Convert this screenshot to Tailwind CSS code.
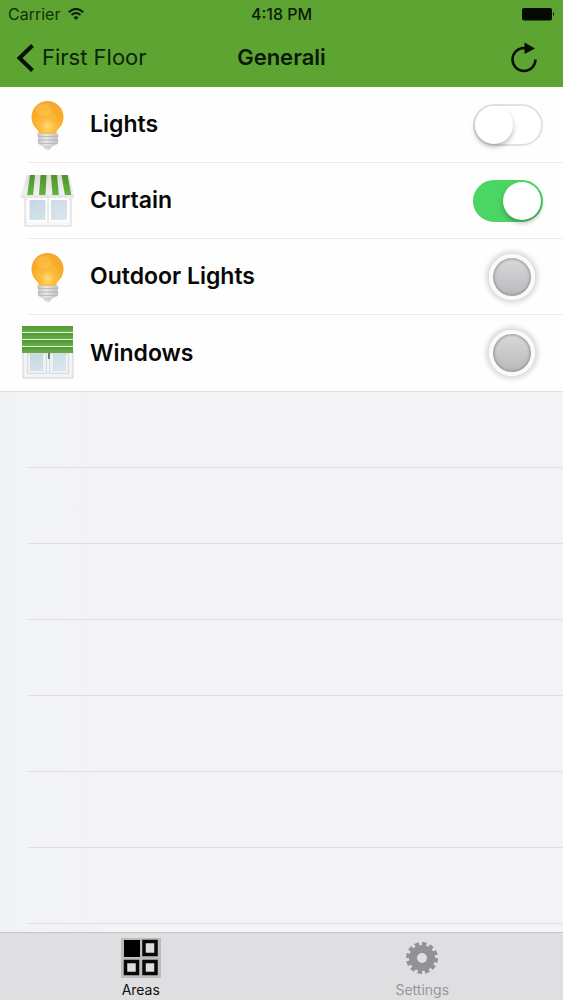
<!DOCTYPE html>
<html lang="en">
<head>
<meta charset="utf-8">
<meta name="viewport" content="width=device-width, initial-scale=1">
<title>Generali</title>
<script src="https://cdn.jsdelivr.net/npm/@tailwindcss/browser@4"></script>
</head>
<body class="flex h-screen flex-col overflow-hidden bg-[#f4f3f6] font-['Inter','Liberation_Sans',sans-serif] text-[#080808]">
<svg class="absolute size-0" aria-hidden="true">
  <defs>
    <radialGradient id="glow" cx="50%" cy="78%" r="78%">
      <stop offset="0" stop-color="#ffdc78"/><stop offset=".3" stop-color="#fbbc3c"/><stop offset=".7" stop-color="#f8a924"/><stop offset="1" stop-color="#f3a93a"/>
    </radialGradient>
    <linearGradient id="screw" x1="0" x2="1" y1="0" y2="0">
      <stop offset="0" stop-color="#c4c4c6"/><stop offset=".4" stop-color="#e6e6e8"/><stop offset="1" stop-color="#c0c0c2"/>
    </linearGradient>
    <linearGradient id="glass" x1="0" x2="1" y1="0" y2="1">
      <stop offset="0" stop-color="#c6d6e1"/><stop offset="1" stop-color="#dce8ee"/>
    </linearGradient>
    <linearGradient id="stripe" x1="0" x2="0" y1="0" y2="1">
      <stop offset="0" stop-color="#4a9427"/><stop offset="1" stop-color="#68b541"/>
    </linearGradient>
    <linearGradient id="slat" x1="0" x2="0" y1="0" y2="1">
      <stop offset="0" stop-color="#4f9a31"/><stop offset="1" stop-color="#68ac4a"/>
    </linearGradient>
    <linearGradient id="awning" x1="0" x2="0" y1="0" y2="1">
      <stop offset="0" stop-color="#dcdcdc"/><stop offset="1" stop-color="#f5f5f5"/>
    </linearGradient>
    <symbol id="bulb" viewBox="0 0 56 56">
      <path d="M27.500 4c9 0 16 7 16 16 0 6-3 10-6 13l-2 4h-16l-2-4c-3-3-6-7-6-13 0-9 7-16 16-16Z" fill="url(#glow)"/>
      <ellipse cx="24" cy="13" rx="8" ry="6" fill="#ffd873" opacity=".3"/>
      <path d="M17.500 36c6 1.500 14 1.500 20 0l1 3-1 2 1 3-1 3-6 3-1 2q-3 3-6 0l-1-2-5-3-1-3 1-3-1-2Z" fill="url(#screw)"/>
      <path d="M18 39.500h20M18 43h20M19 46.500h18M24 50h7" stroke="#b4b4b8" stroke-width=".8" fill="none"/>
    </symbol>
  </defs>
</svg>

<header class="shrink-0 bg-[#5ea433]">
  <div class="grid h-7 grid-cols-3 items-center px-2 text-base">
    <div class="flex items-center gap-2 text-[#12300b]">
      <span>Carrier</span>
      <svg class="h-3 w-4" viewBox="0 0 16 12" fill="none" stroke="#0b1c06" stroke-width="2" aria-label="Wi-Fi"><path d="M.8 4.200Q8-2.300 15.200 4.200M3.500 7q4.500-4 9 0"/><path d="M5.500 9.200q2.500-2 5 0L8 12Z" fill="#0b1c06" stroke="none"/></svg>
    </div>
    <div class="text-center font-medium whitespace-nowrap text-[#0b1c06]">4:18 PM</div>
    <svg class="h-4 w-[34px] justify-self-end" viewBox="0 0 34 16" aria-label="Battery full"><rect x="1" y="2" width="30" height="12.500" rx="2" fill="#050b03"/><path d="M32 6q2 2 0 4Z" fill="#050b03"/></svg>
  </div>
  <nav class="grid h-[59px] grid-cols-3 items-center px-4">
    <a href="#" class="flex items-center gap-2 text-[22px] whitespace-nowrap text-[#0d240a]">
      <svg class="h-7 w-[18px]" viewBox="0 0 18 28" fill="none" stroke="#061003" stroke-width="4"><path d="M16.500 1.500 3.500 14l13 12.500"/></svg>
      First Floor
    </a>
    <h1 class="text-center text-[22px] font-semibold text-[#091a06]">Generali</h1>
    <button type="button" aria-label="Refresh" class="mr-2 justify-self-end">
      <svg class="h-8 w-[30px]" viewBox="0 0 30 32" fill="none"><path d="M26.500 17.500A11.500 11.500 0 1 1 15 6h3" stroke="#061003" stroke-width="2.500"/><path d="M15.500.5 26 6.500 15.500 12Z" fill="#061003"/></svg>
    </button>
  </nav>
</header>

<main class="flex min-h-0 flex-1 flex-col overflow-hidden bg-linear-to-r from-[#f1f4f4] to-[#f4f3f6] to-20%">
  <ul class="shrink-0 border-b border-[#e2e2e4] bg-[#fefefe] text-[23px] font-semibold">
    <li class="ml-7 flex h-[76px] items-center border-b border-[#ececee]">
      <svg class="-ml-2 h-14 w-14" aria-hidden="true"><use href="#bulb"/></svg>
      <label for="lights" class="flex-1 pl-[14px]">Lights</label>
      <input id="lights" type="checkbox" role="switch" class="mr-5 h-[42px] w-[70px] appearance-none rounded-full border-2 border-[#e2e0e3] bg-white before:block before:size-[38px] before:rounded-full before:bg-white before:shadow-[0_3px_5px_#0004] checked:border-[#4bd563] checked:bg-[#4bd563] checked:before:ml-7">
    </li>
    <li class="ml-7 flex h-[76px] items-center border-b border-[#ececee]">
      <svg class="-ml-2 h-14 w-14" viewBox="0 0 56 56" aria-hidden="true">
        <rect x="5" y="26" width="46" height="27" fill="#f8f8f9" stroke="#d4d4d8"/>
        <path d="M8.500 26h18v22h-18zM30 26h18v22H30z" fill="url(#glass)" stroke="#fff" stroke-width="2"/>
        <path d="M28 28v22" stroke="#d5d9de"/>
        <path d="M7 2h42l5 20v3H1v-3Z" fill="url(#awning)"/>
        <path d="M10 2h5l-2 21H7ZM20.500 2h6l-1 21h-6.500ZM31 2h6l2 21h-6.500ZM41.500 2h6l4 21H45Z" fill="url(#stripe)"/>
        <path d="M1 22h53v2q-2 3-5 0-3 3-6 0-3 3-6 0-3 3-6 0-3 3-6 0-3 3-6 0-3 3-6 0-3 3-6 0-3 3-6 0Z" fill="#e6e6e9"/>
      </svg>
      <label for="curtain" class="flex-1 pl-[14px]">Curtain</label>
      <input id="curtain" type="checkbox" role="switch" checked class="mr-5 h-[42px] w-[70px] appearance-none rounded-full border-2 border-[#e2e0e3] bg-white before:block before:size-[38px] before:rounded-full before:bg-white before:shadow-[0_3px_5px_#0004] checked:border-[#4bd563] checked:bg-[#4bd563] checked:before:ml-7">
    </li>
    <li class="ml-7 flex h-[76px] items-center border-b border-[#ececee]">
      <svg class="-ml-2 h-14 w-14" aria-hidden="true"><use href="#bulb"/></svg>
      <span class="flex-1 pl-[14px]">Outdoor Lights</span>
      <button type="button" aria-label="Outdoor Lights" class="mr-7 size-[46px] rounded-full border-4 border-[#fafafa] bg-linear-to-b from-[#dadadc] to-[#b9b9bb] shadow-[0_0_5px_3px_#d8d8da,inset_0_0_3px_1px_#8e8e92]"></button>
    </li>
    <li class="ml-7 flex h-[76px] items-center">
      <svg class="-ml-2 h-14 w-14" viewBox="0 0 56 56" aria-hidden="true">
        <rect x="3" y="26" width="50" height="27" fill="#f3f3f5" stroke="#d2d2d6"/>
        <path d="M7.500 28.500h19v20h-19zM29.500 28.500h19v20h-19z" fill="#eef1f4" stroke="#d7dadf"/>
        <path d="M10 29h13v17H10zM33 29h13v17H33z" fill="url(#glass)"/>
        <path d="M29 28v6" stroke="#6f7c80" stroke-width="2"/>
        <rect x="2" y="1" width="51" height="27" fill="#e6f1e0"/>
        <g fill="url(#slat)"><rect x="2" y="1" width="51" height="6"/><rect x="2" y="8" width="51" height="6"/><rect x="2" y="15" width="51" height="6"/><rect x="2" y="22" width="51" height="6"/></g>
      </svg>
      <span class="flex-1 pl-[14px]">Windows</span>
      <button type="button" aria-label="Windows" class="mr-7 size-[46px] rounded-full border-4 border-[#fafafa] bg-linear-to-b from-[#dadadc] to-[#b9b9bb] shadow-[0_0_5px_3px_#d8d8da,inset_0_0_3px_1px_#8e8e92]"></button>
    </li>
  </ul>
  <div class="ml-7 min-h-0 flex-1 overflow-hidden" aria-hidden="true">
    <div class="h-[76px] border-b border-[#dfdfe1]"></div>
    <div class="h-[76px] border-b border-[#dfdfe1]"></div>
    <div class="h-[76px] border-b border-[#dfdfe1]"></div>
    <div class="h-[76px] border-b border-[#dfdfe1]"></div>
    <div class="h-[76px] border-b border-[#dfdfe1]"></div>
    <div class="h-[76px] border-b border-[#dfdfe1]"></div>
    <div class="h-[76px] border-b border-[#dfdfe1]"></div>
  </div>
</main>

<nav class="grid h-[68px] shrink-0 grid-cols-2 border-t border-[#c6c6c8] bg-[#dfdee1] text-sm">
  <a href="#" aria-current="page" class="flex flex-col items-center pt-1 text-[#101010]">
    <svg class="size-[42px]" viewBox="0 0 42 42" aria-hidden="true"><rect x="1" y="1" width="40" height="40" fill="#bcbcbe"/><path d="M4 3h16v17H4z" fill="#000"/><path d="M24 4.500h12v13H24zM5.500 24.500h12v12h-12zM24 24.500h12v12H24z" fill="#dddcdf" stroke="#080808" stroke-width="3.500"/></svg>
    <span class="leading-[22px]">Areas</span>
  </a>
  <a href="#" class="flex flex-col items-center pt-1 text-[#98989b]">
    <svg class="size-[42px]" viewBox="0 0 42 42" fill="none" stroke="#929295" aria-hidden="true"><circle cx="21" cy="21" r="9" stroke-width="8"/><circle cx="21" cy="21" r="14" stroke-width="4" pathLength="120" stroke-dasharray="6 4"/></svg>
    <span class="leading-[22px]">Settings</span>
  </a>
</nav>
</body>
</html>
